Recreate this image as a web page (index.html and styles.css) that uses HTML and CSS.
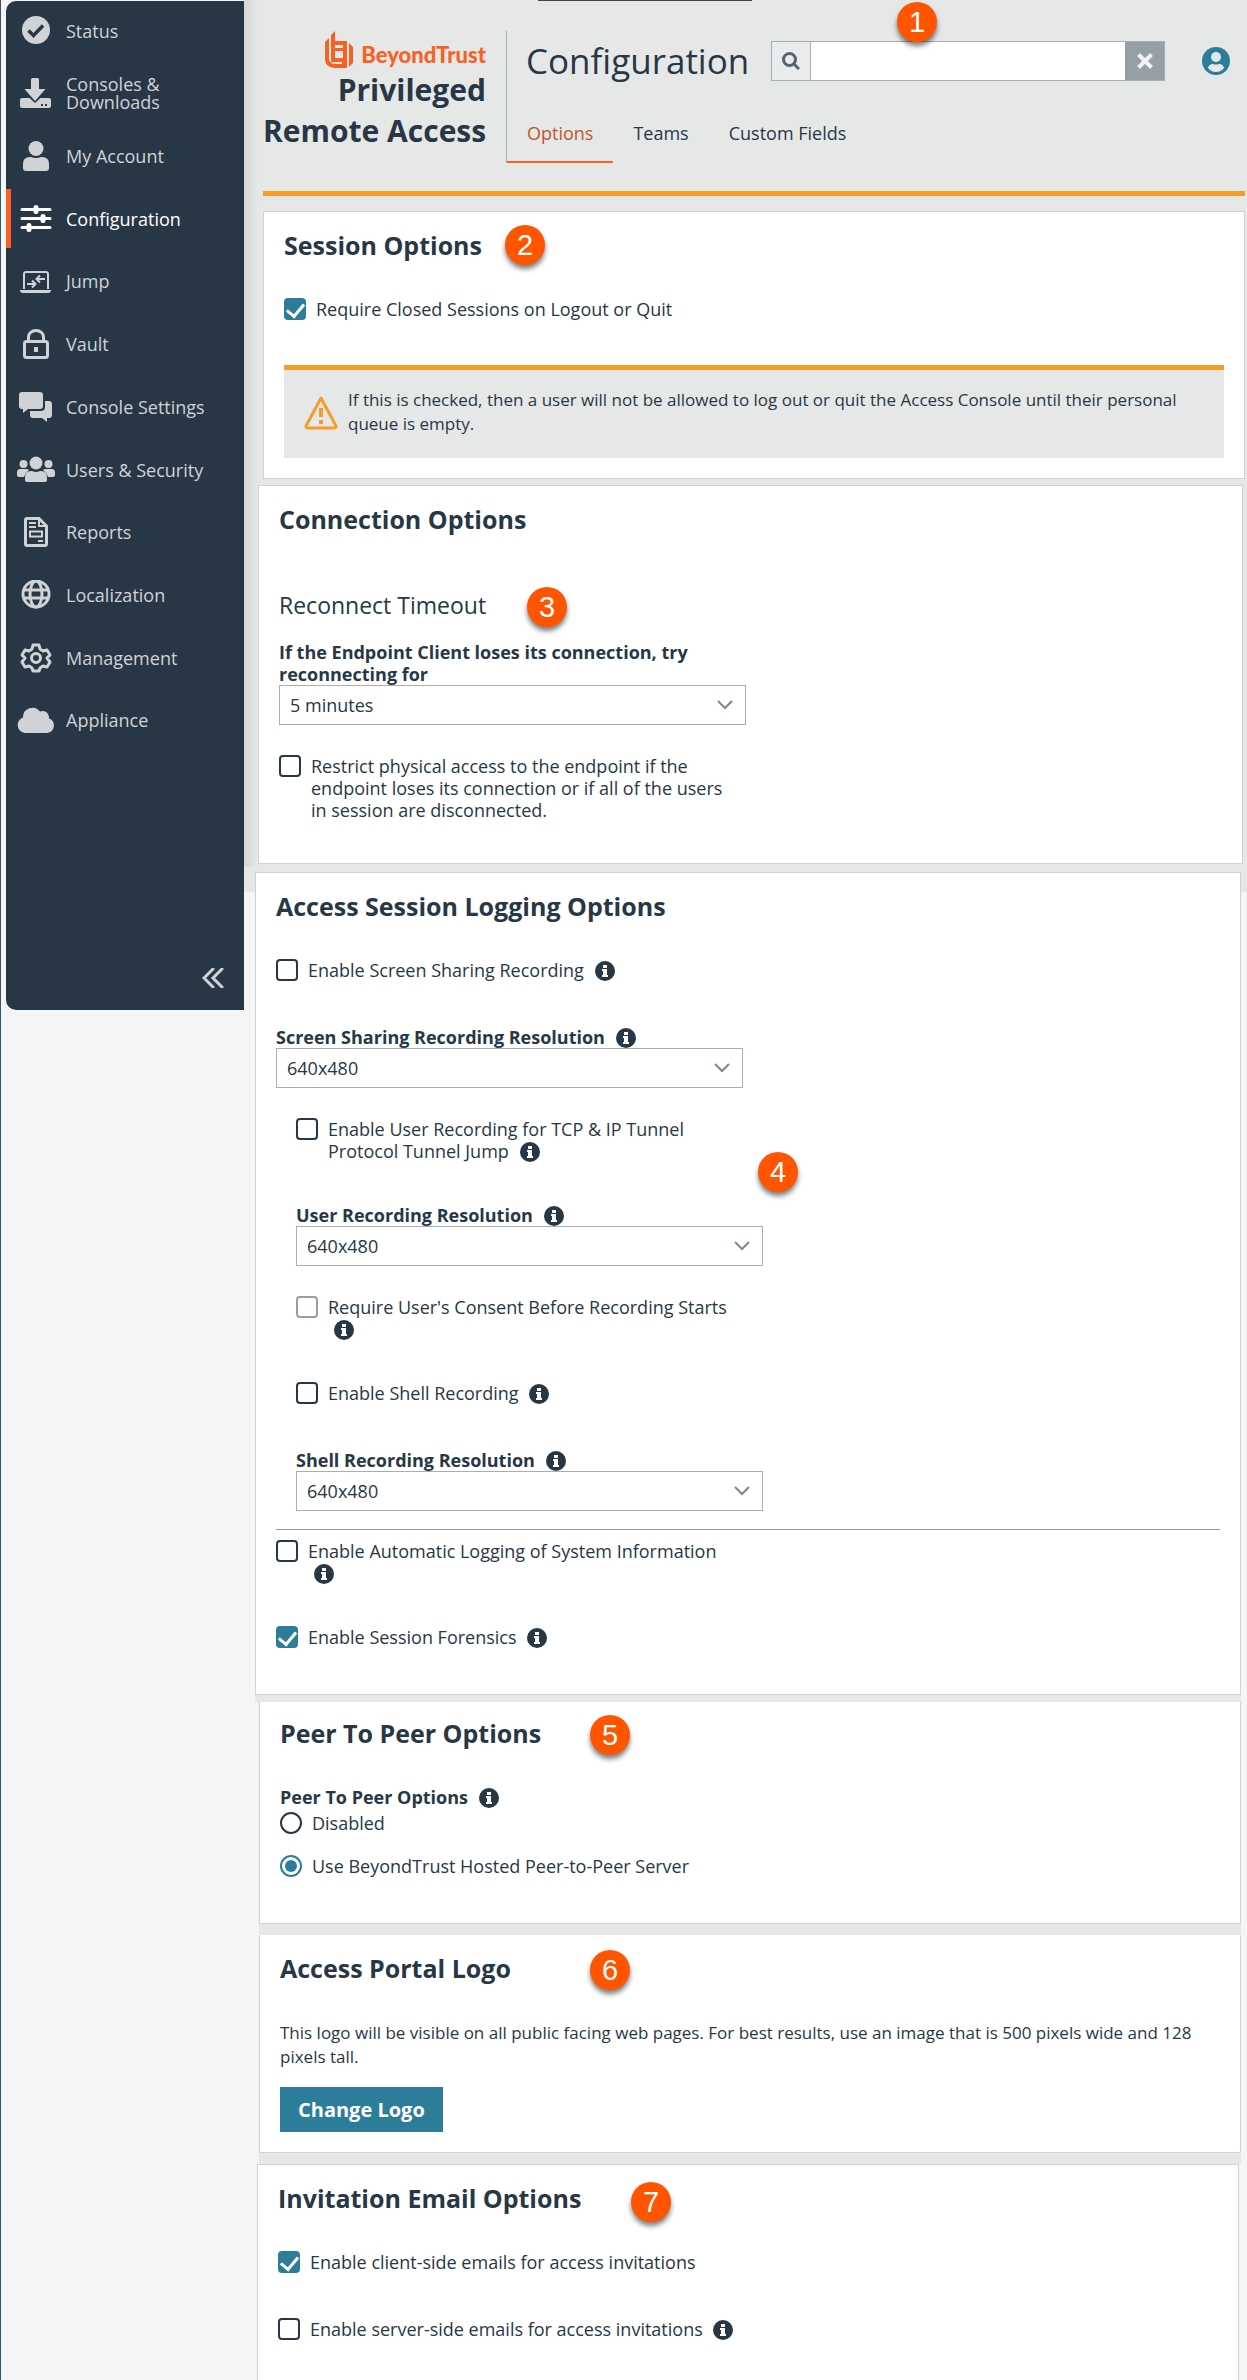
FILE: index.html
```html
<!DOCTYPE html>
<html lang="en">
<head>
    <meta charset="UTF-8">
    <meta name="viewport" content="width=device-width, initial-scale=1.0">
    <title>Configuration - Privileged Remote Access</title>
    <link rel="stylesheet" href="styles.css">
</head>
<body>
    <!-- Shared icons -->
    <svg class="icon-defs" width="0" height="0" aria-hidden="true">
        <symbol id="icon-info" viewBox="0 0 20 20">
            <circle cx="10" cy="10" r="10" fill="#283746"/>
            <path d="M8 4h4v3H8zM7 8h5v6h1v2H7v-2h1v-4H7z" fill="#fff"/>
        </symbol>
        <symbol id="icon-chevron" viewBox="0 0 18 12">
            <path d="M2 2l7 7 7-7" fill="none" stroke="#7d8790" stroke-width="2"/>
        </symbol>
    </svg>

    <aside class="sidebar">
        <nav class="menu">
            <a href="#status"><svg width="38" height="30" viewBox="0 0 38 30"><circle cx="19" cy="14" r="14" fill="currentColor"/><path d="M11.500 14.500l5 5 9.500-10" fill="none" stroke="#283746" stroke-width="3.500"/></svg>Status</a>
            <a href="#consoles"><svg width="38" height="30" viewBox="0 0 38 30" fill="currentColor"><path d="M14 1.500Q14 0 15.500 0h5Q22 0 22 1.500V11h6.500L18 23 7.500 11H14z"/><path d="M5 20h7.500l5.500 5 5.500-5H32q2 0 2 2v6q0 2-2 2H5q-2 0-2-2v-6q0-2 2-2z"/><path d="M24 26h2v2h-2zM28 26h2v2h-2z" fill="#283746"/></svg><span>Consoles &amp;<br>Downloads</span></a>
            <a href="#account"><svg width="38" height="30" viewBox="0 0 38 30" fill="currentColor"><circle cx="19" cy="7.500" r="7.500"/><path d="M6 27v-4q0-7 7-7h1q5 2 10 0h1q7 0 7 7v4q0 3-3 3H9q-3 0-3-3z"/></svg>My Account</a>
            <a href="#configuration" class="active"><svg width="38" height="30" viewBox="0 0 38 30" fill="none" stroke="currentColor" stroke-linecap="round"><path d="M5 5.500h28M5 14.500h28M5 23.500h28" stroke-width="3"/><path d="M19 3.500v4M26 12.500v4M12 21.500v4" stroke-width="5"/></svg>Configuration</a>
            <a href="#jump"><svg width="38" height="30" viewBox="0 0 38 30" fill="none" stroke="currentColor" stroke-width="2"><path d="M7 23V8q0-2 2-2h20q2 0 2 2v15"/><path d="M3 24h31q0 3-3 3H6q-3 0-3-3z" fill="currentColor" stroke="none"/><path d="M10 18h8M15 14.500l3.500 3.500-3.500 3.500M28 13h-8M23 9.500L19.500 13l3.500 3.500"/></svg>Jump</a>
            <a href="#vault"><svg width="38" height="30" viewBox="0 0 38 30" fill="none" stroke="currentColor" stroke-width="3"><rect x="7.500" y="12.500" width="23" height="16" rx="2"/><path d="M11.500 12V8a7.500 6.500 0 0 1 15 0v4"/><path d="M19 18v5" stroke-width="4"/></svg>Vault</a>
            <a href="#console-settings"><svg width="38" height="30" viewBox="0 0 38 30" fill="currentColor"><path d="M5 0h18q3 0 3 3v11q0 3-3 3H11l-5 4v-4H5q-3 0-3-3V3q0-3 3-3z"/><path d="M28 9h4q3 0 3 3v11q0 3-3 3h-2v4l-5-4H16q-3 0-3-3v-4h11q4 0 4-4z"/></svg>Console Settings</a>
            <a href="#users"><svg width="38" height="30" viewBox="0 0 38 30" fill="currentColor"><circle cx="19" cy="8" r="6.500"/><circle cx="6.500" cy="9" r="4"/><circle cx="31.500" cy="9" r="4"/><path d="M8 25v-2q0-7 6-7h1q4 2 8 0h1q6 0 6 7v2q0 2-2 2H10q-2 0-2-2zM3 14h6q2 0 3 1-4 3-5 7H2q-2 0-2-2v-2q0-4 3-4zM29 14h6q3 0 3 4v2q0 2-2 2h-5q-1-4-5-7 1-1 3-1z"/></svg>Users &amp; Security</a>
            <a href="#reports"><svg width="38" height="30" viewBox="0 0 38 30" fill="none" stroke="currentColor" stroke-width="3"><path d="M10 1.500h12L29.500 9v18q0 1.500-1.500 1.500H10q-1.500 0-1.500-1.500V3q0-1.500 1.500-1.500z"/><path d="M22 2v7h7" stroke-width="2"/><path d="M12 6h7M12 10h7M21 24h5" stroke-width="2"/><path d="M13 14.500h12v5H13z" stroke-width="2"/></svg>Reports</a>
            <a href="#localization"><svg width="38" height="30" viewBox="0 0 38 30" fill="none" stroke="currentColor" stroke-width="3"><circle cx="19" cy="14" r="13"/><ellipse cx="19" cy="14" rx="6" ry="13"/><path d="M7 10h24M7 18h24"/></svg>Localization</a>
            <a href="#management"><svg width="38" height="30" viewBox="0 0 38 30" fill="none" stroke="currentColor" stroke-width="3"><path d="M16 2h6l1 4 3 2 4-1 3 5-3 3 3 4-3 5-4-1-3 2-1 3h-6l-1-3-3-2-4 1-3-5 3-4-3-3 3-5 4 1 3-2z" stroke-linejoin="round"/><circle cx="19" cy="15" r="4.500"/></svg>Management</a>
            <a href="#appliance"><svg width="38" height="30" viewBox="0 0 38 30" fill="currentColor"><path d="M8 28a8 8 0 0 1-2-15.500A9.500 9.500 0 0 1 23 6.500a6.500 6.500 0 0 1 9 7A7.500 7.500 0 0 1 30 28z"/></svg>Appliance</a>
        </nav>
        <button type="button" class="collapse" aria-label="Collapse menu">
            <svg width="22" height="20" viewBox="0 0 22 20" fill="none" stroke="currentColor" stroke-width="3"><path d="M11 1l-9 9 9 9M20 1l-9 9 9 9" stroke-linecap="round"/></svg>
        </button>
    </aside>

    <main class="page">
        <header class="page-header">
            <div class="brand">
                <div class="brand-logo">
                    <svg width="28" height="38" viewBox="0 0 28 38" fill="#f96124"><path d="M10 0v10h12v27H9Q0 36 0 28V11l4-4v20q0 4 4 6h9v-2H6V4zM10 14v3h8v-3zM10 20v7h8v-7z" fill-rule="evenodd"/><path d="M24 12l4 4v16l-4 4z"/></svg>
                    <span>BeyondTrust</span>
                </div>
                <p>Privileged<br>Remote Access</p>
            </div>
            <div class="heading-area">
                <div class="title-row">
                    <h1>Configuration</h1>
                    <form class="search">
                        <button type="submit" class="search-go" aria-label="Search">
                            <svg width="18" height="18" viewBox="0 0 18 18" fill="none" stroke="#566370"><circle cx="7.500" cy="7.500" r="6" stroke-width="3"/><path d="M11.500 11.500l5.500 5.500" stroke-width="3"/></svg>
                        </button>
                        <input type="text" aria-label="Search">
                        <button type="reset" class="search-clear" aria-label="Clear">
                            <svg width="16" height="16" viewBox="0 0 16 16" fill="none" stroke="#f1f2f3" stroke-width="4"><path d="M1.500 1.500l13 13M14.500 1.500l-13 13"/></svg>
                        </button>
                    </form>
                    <a href="#profile" class="profile" aria-label="Profile">
                        <svg width="28" height="28" viewBox="0 0 28 28"><circle cx="14" cy="14" r="14" fill="#2c7d9a"/><circle cx="14" cy="10" r="5" fill="#e6e8e7"/><path d="M6 21q1-4 5-4 3 1 6 0 4 0 5 4-3 4-8 4t-8-4z" fill="#e6e8e7"/></svg>
                    </a>
                </div>
                <nav class="tabs">
                    <a href="#options" class="active">Options</a>
                    <a href="#teams">Teams</a>
                    <a href="#custom-fields">Custom Fields</a>
                </nav>
            </div>
            <span class="badge badge-1">1</span>
        </header>

        <section class="panel session">
            <h2>Session Options</h2>
            <span class="badge badge-2">2</span>
            <label class="check"><input type="checkbox" checked><span>Require Closed Sessions on Logout or Quit</span></label>
            <div class="alert">
                <svg width="34" height="36" viewBox="0 0 34 36" fill="none" stroke="#f89c28" stroke-width="3"><path d="M17 4L2 32q0 2 2 2h26q2 0 2-2z" stroke-linejoin="round"/><path d="M17 14v9M17 26v4" stroke-width="4"/></svg>
                <p>If this is checked, then a user will not be allowed to log out or quit the Access Console until their personal queue is empty.</p>
            </div>
        </section>

        <section class="panel connection">
            <h2>Connection Options</h2>
            <h3>Reconnect Timeout</h3>
            <span class="badge badge-3">3</span>
            <div class="field">
                <label for="reconnect">If the Endpoint Client loses its connection, try reconnecting for</label>
                <div class="select">
                    <select id="reconnect"><option>5 minutes</option></select>
                    <svg width="18" height="12"><use href="#icon-chevron"/></svg>
                </div>
            </div>
            <label class="check"><input type="checkbox"><span>Restrict physical access to the endpoint if the endpoint loses its connection or if all of the users in session are disconnected.</span></label>
        </section>

        <section class="panel logging">
            <h2>Access Session Logging Options</h2>
            <span class="badge badge-4">4</span>
            <label class="check"><input type="checkbox"><span>Enable Screen Sharing Recording <svg class="info" width="20" height="20"><use href="#icon-info"/></svg></span></label>
            <div class="field">
                <label for="screen-resolution">Screen Sharing Recording Resolution <svg class="info" width="20" height="20"><use href="#icon-info"/></svg></label>
                <div class="select">
                    <select id="screen-resolution"><option>640x480</option></select>
                    <svg width="18" height="12"><use href="#icon-chevron"/></svg>
                </div>
            </div>
            <div class="nested">
                <label class="check"><input type="checkbox"><span>Enable User Recording for TCP &amp; IP Tunnel Protocol Tunnel Jump <svg class="info" width="20" height="20"><use href="#icon-info"/></svg></span></label>
                <div class="field">
                    <label for="user-resolution">User Recording Resolution <svg class="info" width="20" height="20"><use href="#icon-info"/></svg></label>
                    <div class="select">
                        <select id="user-resolution"><option>640x480</option></select>
                        <svg width="18" height="12"><use href="#icon-chevron"/></svg>
                    </div>
                </div>
                <label class="check"><input type="checkbox" disabled><span>Require User's Consent Before Recording Starts <svg class="info" width="20" height="20"><use href="#icon-info"/></svg></span></label>
                <label class="check"><input type="checkbox"><span>Enable Shell Recording <svg class="info" width="20" height="20"><use href="#icon-info"/></svg></span></label>
                <div class="field">
                    <label for="shell-resolution">Shell Recording Resolution <svg class="info" width="20" height="20"><use href="#icon-info"/></svg></label>
                    <div class="select">
                        <select id="shell-resolution"><option>640x480</option></select>
                        <svg width="18" height="12"><use href="#icon-chevron"/></svg>
                    </div>
                </div>
            </div>
            <hr>
            <label class="check"><input type="checkbox"><span>Enable Automatic Logging of System Information <svg class="info" width="20" height="20"><use href="#icon-info"/></svg></span></label>
            <label class="check"><input type="checkbox" checked><span>Enable Session Forensics <svg class="info" width="20" height="20"><use href="#icon-info"/></svg></span></label>
        </section>

        <section class="panel peer">
            <h2>Peer To Peer Options</h2>
            <span class="badge badge-5">5</span>
            <fieldset>
                <legend>Peer To Peer Options <svg class="info" width="20" height="20"><use href="#icon-info"/></svg></legend>
                <label class="check"><input type="radio" name="peer"><span>Disabled</span></label>
                <label class="check"><input type="radio" name="peer" checked><span>Use BeyondTrust Hosted Peer-to-Peer Server</span></label>
            </fieldset>
        </section>

        <section class="panel logo">
            <h2>Access Portal Logo</h2>
            <span class="badge badge-6">6</span>
            <p>This logo will be visible on all public facing web pages. For best results, use an image that is 500 pixels wide and 128 pixels tall.</p>
            <button type="button" class="button">Change Logo</button>
        </section>

        <section class="panel invitation">
            <h2>Invitation Email Options</h2>
            <span class="badge badge-7">7</span>
            <label class="check"><input type="checkbox" checked><span>Enable client-side emails for access invitations</span></label>
            <label class="check"><input type="checkbox"><span>Enable server-side emails for access invitations <svg class="info" width="20" height="20"><use href="#icon-info"/></svg></span></label>
        </section>
    </main>
</body>
</html>
```
FILE: styles.css
```css
* {
    margin: 0;
    padding: 0;
    box-sizing: border-box;
}

body {
    display: flex;
    min-height: 100vh;
    border-left: 1px solid #33536e;
    background: #f5f5f5;
    color: #283746;
    font-family: "Open Sans", "Noto Sans", sans-serif;
    font-size: 18px;
    line-height: 24px;
}

input, select, button {
    font: inherit;
    color: inherit;
}

.icon-defs {
    position: absolute;
}

/* Sidebar */
.sidebar {
    display: flex;
    flex-direction: column;
    flex: 0 0 238px;
    align-self: flex-start;
    margin: 1px 0 0 5px;
    padding-bottom: 22px;
    border-radius: 10px 0 0 10px;
    background: #283746;
    color: #cfd3d5;
}

.menu {
    display: flex;
    flex-direction: column;
    justify-content: space-between;
    height: 749px;
}

.menu a {
    display: flex;
    align-items: center;
    gap: 11px;
    height: 59px;
    padding-left: 6px;
    border-left: 5px solid transparent;
    color: #cfd3d5;
    line-height: 18px;
    text-decoration: none;
}

.menu a.active {
    border-left-color: #f96124;
    color: #fff;
}

.collapse {
    align-self: flex-end;
    height: 20px;
    margin: 218px 20px 0 0;
    border: 0;
    background: none;
    line-height: 0;
}

/* Main area: grey surface, sidebar shadow on the left edge */
.page {
    display: flex;
    flex: 1;
    flex-direction: column;
    min-width: 0;
    background:
        linear-gradient(#444, #444) 294px 0 / 214px 1px no-repeat,
        linear-gradient(to right, #d6d8d7, #e6e8e7) 0 0 / 14px 867px no-repeat,
        linear-gradient(#e6e8e7, #e6e8e7) 0 0 / 100% 892px no-repeat;
}

.page-header {
    position: relative;
    display: flex;
    margin: 0 2px 15px 19px;
    padding: 31px 0 28px;
    border-bottom: 5px solid #f89c28;
}

.brand {
    width: 244px;
    padding-right: 20px;
    border-right: 1px solid #a9aeb5;
    text-align: right;
    white-space: nowrap;
}

.brand-logo {
    display: flex;
    justify-content: flex-end;
    gap: 8px;
    height: 38px;
    color: #f96124;
    font-family: Lato, "Open Sans", sans-serif;
    font-size: 22px;
    font-weight: 900;
    line-height: 48px;
}

.brand p {
    font-size: 30px;
    font-weight: bold;
    line-height: 41px;
}

.heading-area {
    display: flex;
    flex: 1;
    flex-direction: column;
    justify-content: space-between;
    min-height: 132px;
}

.title-row {
    display: flex;
    align-items: center;
    padding: 10px 15px 0 19px;
}

h1 {
    margin-right: 22px;
    font-size: 35px;
    font-weight: normal;
    line-height: 40px;
}

.search {
    display: flex;
    flex: 1;
    height: 40px;
    margin-right: 37px;
    border: 1px solid #a9aeb5;
}

.search input {
    flex: 1;
    min-width: 0;
    padding: 0 10px;
    border: 0;
    background: #fff;
}

.search button {
    width: 39px;
    border: 0;
    line-height: 0;
}

.search .search-go {
    border-right: 1px solid #a9aeb5;
    background: #eaebed;
}

.search .search-clear {
    background: #969ea6;
}

.profile {
    line-height: 0;
}

.tabs {
    display: flex;
}

.tabs a {
    padding: 0 20px 16px;
    border-bottom: 2px solid transparent;
    color: #283746;
    text-decoration: none;
}

.tabs a.active {
    border-bottom-color: #f96124;
    color: #c3532a;
}

/* Panels */
.panel {
    position: relative;
    padding: 17px 20px 0;
    border: 1px solid #cfd3d3;
    background: #fff;
    box-shadow: 0 11px 0 #e6e8e7;
}

h2 {
    margin-bottom: 37px;
    font-size: 25px;
    font-weight: bold;
    line-height: 32px;
}

h3 {
    margin-bottom: 20px;
    font-size: 23px;
    font-weight: normal;
    line-height: 32px;
}

.session {
    margin: 0 2px 6px 19px;
    padding-bottom: 20px;
}

.connection {
    margin: 0 4px 8px 14px;
}

.connection h2 {
    margin-bottom: 54px;
}

.logging {
    margin: 0 6px 7px 11px;
    padding-bottom: 1px;
    box-shadow: 0 7px 0 #e6e8e7;
}

.peer,
.logo {
    margin: 0 6px 11px 15px;
    border-top: 0;
}

.invitation {
    flex: 1;
    margin: 0 8px 0 13px;
    border-bottom: 0;
}

.check {
    display: flex;
    gap: 10px;
    width: 459px;
    min-height: 25px;
    margin-bottom: 42px;
    line-height: 22px;
}

.check input {
    flex: none;
    width: 22px;
    height: 22px;
    appearance: none;
    border: 2px solid #283746;
    border-radius: 4px;
    background: #fff;
}

.check input:disabled {
    border-color: #969ea6;
}

.check input[type="checkbox"]:checked {
    border-color: #2c7d9a;
    background: #2c7d9a;
}

.check input[type="checkbox"]:checked::before {
    content: "";
    display: block;
    width: 8px;
    height: 14px;
    margin: 0 auto;
    border: solid #fff;
    border-width: 0 3px 3px 0;
    transform: rotate(40deg);
}

.check input[type="radio"] {
    border-radius: 50%;
}

.check input[type="radio"]:checked {
    border-color: #2c7d9a;
    padding: 3px;
    background: #2c7d9a content-box;
}

.info {
    margin: -3px 0 -3px 6px;
    vertical-align: -1px;
}

.field {
    width: 467px;
    margin-bottom: 30px;
}

.field label,
legend {
    display: block;
    font-weight: bold;
    line-height: 22px;
}

.select {
    position: relative;
}

.select select {
    display: block;
    width: 100%;
    height: 40px;
    padding: 0 10px;
    appearance: none;
    border: 1px solid #a9aeb5;
    border-radius: 0;
    background: #fff;
}

.select svg {
    position: absolute;
    top: 14px;
    right: 12px;
    pointer-events: none;
}

.nested {
    margin-left: 20px;
}

.nested .field:last-child {
    margin-bottom: 18px;
}

hr {
    margin-bottom: 10px;
    border: 0;
    border-top: 1px solid #969696;
}

fieldset {
    border: 0;
}

fieldset .check {
    margin: 4px 0 18px;
}

.peer {
    padding-top: 15px;
    padding-bottom: 25px;
}

.alert {
    display: flex;
    align-items: center;
    gap: 10px;
    padding: 18px 20px 22px;
    border-top: 5px solid #f89c28;
    background: #e6e8e7;
    font-size: 17px;
}

.alert svg {
    flex: none;
}

.logo {
    padding-bottom: 20px;
}

.logo p {
    font-size: 17px;
}

.button {
    height: 45px;
    margin-top: 18px;
    padding: 0 18px;
    border: 0;
    background: #2c7d9a;
    color: #fff;
    font-size: 20px;
    font-weight: bold;
}

.invitation .check:last-child {
    margin-bottom: 0;
}

/* Numbered callouts */
.badge {
    position: absolute;
    width: 40px;
    height: 40px;
    border-radius: 50%;
    background: #ff5500;
    box-shadow: 0 4px 5px rgba(0, 0, 0, 0.5);
    color: #fff;
    font-family: "Liberation Sans", Arial, sans-serif;
    font-size: 29px;
    line-height: 40px;
    text-align: center;
}

.badge-1 { top: 2px; left: 634px; }
.badge-2 { top: 13px; left: 241px; }
.badge-3 { top: 101px; left: 268px; }
.badge-4 { top: 279px; left: 502px; }
.badge-5 { top: 13px; left: 330px; }
.badge-6 { top: 15px; left: 330px; }
.badge-7 { top: 17px; left: 373px; }
```
